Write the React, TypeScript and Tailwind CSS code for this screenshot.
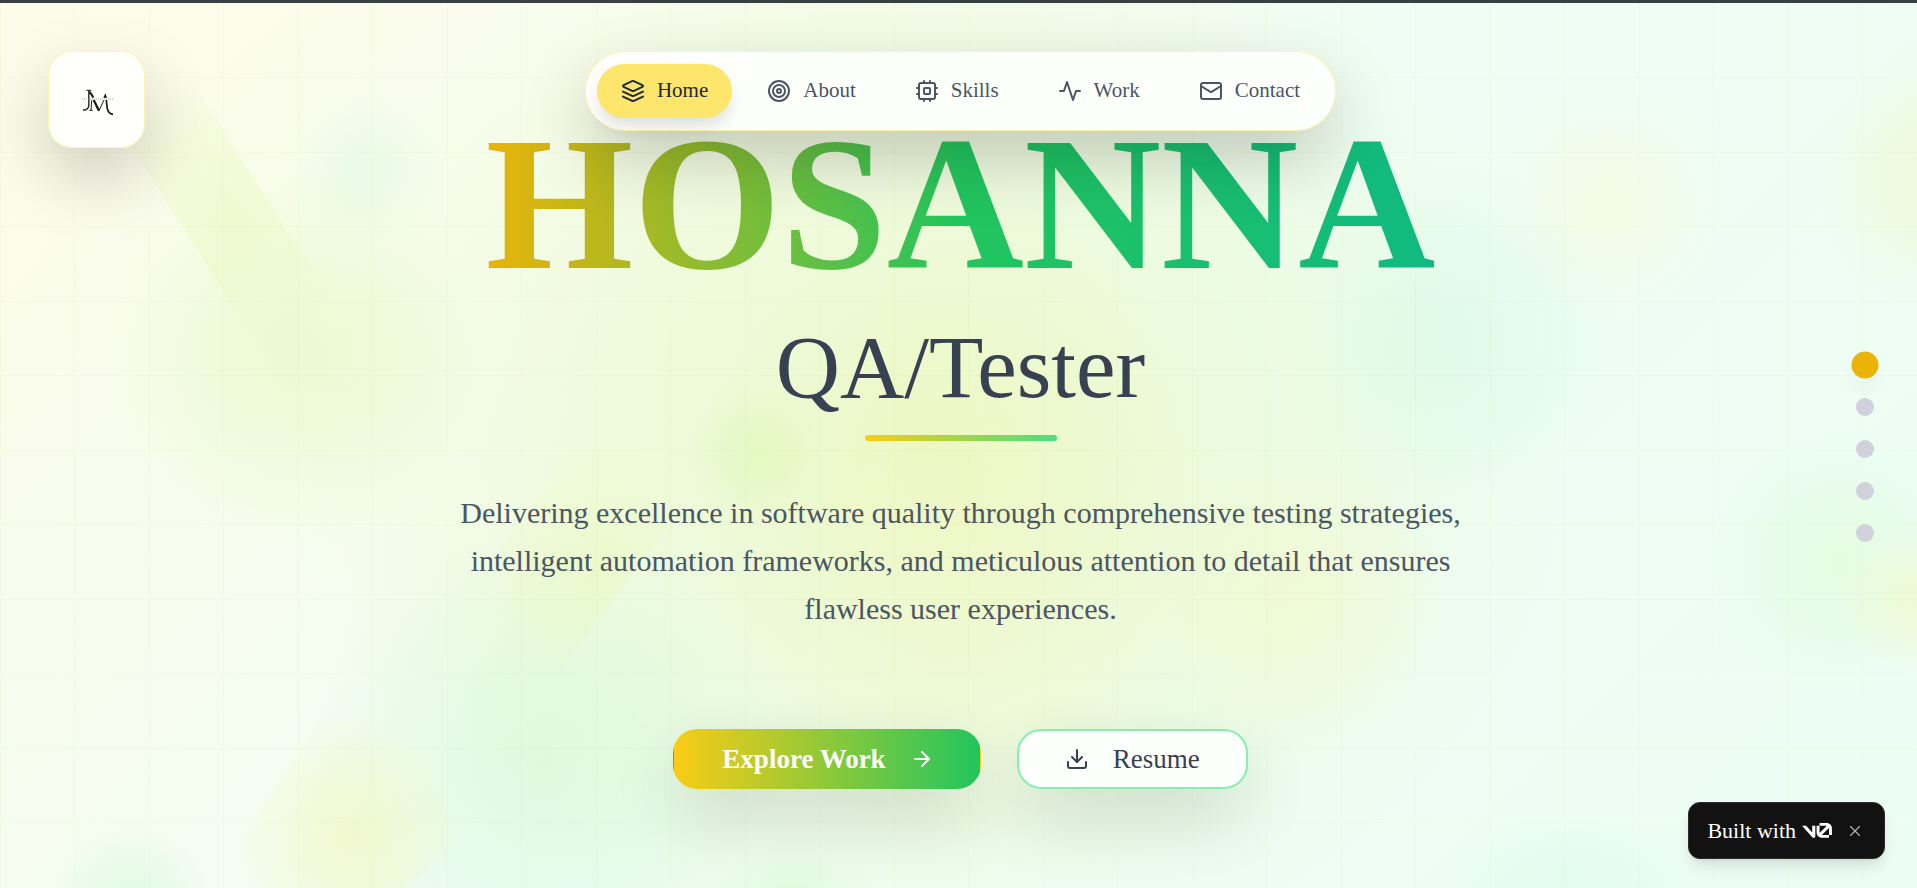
import type { ReactNode } from "react";
import { ArrowRight, Download, Target, X } from "lucide-react";

function LineIcon({ children }: { children: ReactNode }) {
  return (
    <svg
      viewBox="0 0 24 24"
      className="size-6"
      fill="none"
      stroke="currentColor"
      strokeWidth="2"
      strokeLinecap="round"
      strokeLinejoin="round"
      aria-hidden="true"
    >
      {children}
    </svg>
  );
}

const navItems = [
  {
    label: "Home",
    active: true,
    icon: (
      <LineIcon>
        <path d="m12.83 2.18a2 2 0 0 0-1.66 0L2.6 6.08a1 1 0 0 0 0 1.83l8.58 3.91a2 2 0 0 0 1.66 0l8.58-3.9a1 1 0 0 0 0-1.83Z" />
        <path d="m22 17.65-9.17 4.16a2 2 0 0 1-1.66 0L2 17.65" />
        <path d="m22 12.65-9.17 4.16a2 2 0 0 1-1.66 0L2 12.65" />
      </LineIcon>
    ),
  },
  { label: "About", active: false, icon: <Target size={24} aria-hidden="true" /> },
  {
    label: "Skills",
    active: false,
    icon: (
      <LineIcon>
        <rect x="4" y="4" width="16" height="16" rx="2" />
        <rect x="9" y="9" width="6" height="6" rx="1" />
        <path d="M15 2v2M15 20v2M2 15h2M2 9h2M20 15h2M20 9h2M9 2v2M9 20v2" />
      </LineIcon>
    ),
  },
  {
    label: "Work",
    active: false,
    icon: (
      <LineIcon>
        <path d="M22 12h-4l-3 9L9 3l-3 9H2" />
      </LineIcon>
    ),
  },
  {
    label: "Contact",
    active: false,
    icon: (
      <LineIcon>
        <rect x="2" y="4" width="20" height="16" rx="2" />
        <path d="m22 7-8.97 5.7a1.94 1.94 0 0 1-2.06 0L2 7" />
      </LineIcon>
    ),
  },
];

type Blob = { x: number; y: number; rx: number; ry: number; color: string; opacity: number; clip?: string };

const blobs: Blob[] = [
  { x: 930, y: 440, rx: 640, ry: 540, color: "#e2f5a8", opacity: 0.5 },
  { x: 960, y: 520, rx: 260, ry: 320, color: "#fdf3a6", opacity: 0.28 },
  { x: 295, y: 350, rx: 190, ry: 190, color: "#dcf7b4", opacity: 0.5 },
  { x: 225, y: 205, rx: 150, ry: 150, color: "#e6f7b4", opacity: 0.45, clip: "strip" },
  { x: 365, y: 165, rx: 80, ry: 80, color: "#c8f9dc", opacity: 0.34 },
  { x: 755, y: 450, rx: 66, ry: 66, color: "#cdf79f", opacity: 0.34 },
  { x: 1295, y: 595, rx: 150, ry: 150, color: "#fbf3a0", opacity: 0.26 },
  { x: 1450, y: 330, rx: 170, ry: 170, color: "#c4f5de", opacity: 0.34 },
  { x: 1610, y: 200, rx: 120, ry: 120, color: "#fbf7c0", opacity: 0.3 },
  { x: 1930, y: 175, rx: 110, ry: 130, color: "#eef5b0", opacity: 0.4 },
  { x: 1840, y: 560, rx: 130, ry: 130, color: "#d8f9c4", opacity: 0.4 },
  { x: 1925, y: 600, rx: 80, ry: 70, color: "#f8f3a4", opacity: 0.35 },
  { x: 540, y: 760, rx: 240, ry: 240, color: "#c8f5cc", opacity: 0.42 },
  { x: 350, y: 835, rx: 115, ry: 125, color: "#f5f29c", opacity: 0.4, clip: "corner" },
  { x: 590, y: 570, rx: 130, ry: 130, color: "#e8f69c", opacity: 0.28, clip: "band" },
  { x: 130, y: 890, rx: 80, ry: 70, color: "#bff5d0", opacity: 0.34 },
  { x: 1570, y: 900, rx: 130, ry: 90, color: "#c0f7dc", opacity: 0.3 },
  { x: 790, y: 900, rx: 90, ry: 60, color: "#c4f5be", opacity: 0.35 },
];

function Backdrop() {
  return (
    <svg
      aria-hidden="true"
      className="absolute inset-0 h-full w-full"
      viewBox="0 0 1917 888"
      preserveAspectRatio="xMidYMid slice"
    >
      <defs>
        {blobs.map((b, i) => (
          <radialGradient key={i} id={`blob-${i}`}>
            <stop offset="0" stopColor={b.color} stopOpacity={b.opacity} />
            <stop offset="0.5" stopColor={b.color} stopOpacity={b.opacity * 0.55} />
            <stop offset="1" stopColor={b.color} stopOpacity="0" />
          </radialGradient>
        ))}
        <clipPath id="strip">
          <polygon points="150,10 370,360 270,360 90,80" />
        </clipPath>
        <clipPath id="corner">
          <polygon points="225,888 225,860 330,700 480,700 480,820 400,888" />
        </clipPath>
        <clipPath id="band">
          <polygon points="420,660 590,420 700,480 520,720" />
        </clipPath>
      </defs>
      {blobs.map((b, i) => (
        <g key={i} clipPath={b.clip ? `url(#${b.clip})` : undefined}>
          <ellipse cx={b.x} cy={b.y} rx={b.rx} ry={b.ry} fill={`url(#blob-${i})`} />
        </g>
      ))}
    </svg>
  );
}

function Grid() {
  return (
    <div
      aria-hidden="true"
      className="absolute inset-0 bg-[linear-gradient(to_right,#84cc160a_1px,transparent_1px,transparent_74px,#84cc160a_74px,#84cc160a_75px,transparent_75px),linear-gradient(to_bottom,#84cc160a_1px,transparent_1px,transparent_74px,#84cc160a_74px,#84cc160a_75px,transparent_75px)] bg-[size:149px_149px]"
    />
  );
}

function Monogram() {
  return (
    <svg viewBox="0 0 96 84" className="h-7 w-8" fill="none" stroke="#1c1c1c" aria-hidden="true">
      <path d="M13 7H28" strokeWidth="3" />
      <path d="M20.5 7V50C20.5 60 14 66 3 66" strokeWidth="4" />
      <path d="M21 12C28 15 31 22 34 29" strokeWidth="6" />
      <path d="M29 37L27 67M22 67H32" strokeWidth="3" />
      <path d="M35 36L51 68" strokeWidth="7" />
      <path d="M51 68L66 36" strokeWidth="3" />
      <path d="M66 29L70 21L73 29" strokeWidth="4" fill="#1c1c1c" />
      <path d="M73 36C75 54 73 77 93 79" strokeWidth="5" />
      <path d="M0 33H94" strokeWidth="2" strokeDasharray="3 3" stroke="#777" />
    </svg>
  );
}

function V0Logo() {
  return (
    <svg viewBox="0 0 40 20" className="h-[15px] w-[30px]" fill="currentColor" role="img" aria-label="v0">
      <path d="M23.3919 0H32.9188C36.7819 0 39.9136 3.13165 39.9136 6.99475V16.0805H36.0006V6.99475C36.0006 6.90167 35.9969 6.80925 35.9898 6.71766L26.4628 16.079C26.4949 16.08 26.5272 16.0805 26.5595 16.0805H36.0006V19.7762H26.5595C22.6964 19.7762 19.4788 16.6139 19.4788 12.7508V3.68923H23.3919V12.7508C23.3919 12.9253 23.4054 13.0977 23.4316 13.2668L33.1682 3.6995C33.0861 3.6927 33.003 3.68923 32.9188 3.68923H23.3919V0Z" />
      <path d="M13.7688 19.0956L0 3.68759H5.53933L13.6231 12.7337V3.68759H17.7535V17.5746C17.7535 19.6705 15.1654 20.6584 13.7688 19.0956Z" />
    </svg>
  );
}

export default function App() {
  return (
    <div className="relative min-h-screen overflow-hidden border-t-[3px] border-[#374141] bg-[linear-gradient(135deg,#fefce8,#f0fdf4,#ecfdf5)] font-['Liberation_Serif','Times_New_Roman',serif]">
      <Backdrop />
      <Grid />

      <main className="relative flex min-h-screen flex-col items-center justify-center pt-1 pl-1 text-center">
        <h1 className="bg-linear-to-r/srgb from-[#eab308] via-[#22c55e] to-[#10b981] bg-clip-text text-[190px] leading-[190px] font-bold text-transparent">
          HOSANNA
        </h1>
        <p className="mt-6 text-[89px] leading-[88px] text-[#374151]">QA/Tester</p>
        <div className="mt-6 h-1.5 w-48 rounded-full bg-linear-to-r/srgb from-[#facc15] to-[#4ade80]" />
        <p className="mt-12 max-w-5xl text-[30px] leading-[48px] text-[#4b5563]">
          Delivering excellence in software quality through comprehensive testing strategies, intelligent automation
          frameworks, and meticulous attention to detail that ensures flawless user experiences.
        </p>
        <div className="mt-24 flex items-center gap-9">
          <button
            type="button"
            className="flex h-[60px] items-center gap-6 rounded-3xl border border-transparent bg-linear-to-r/srgb from-[#facc15] to-[#22c55e] pr-[46px] pl-12 text-[27px] font-bold text-white shadow-[0_28px_70px_-4px_#00000028]"
          >
            Explore Work
            <ArrowRight size={24} aria-hidden="true" />
          </button>
          <button
            type="button"
            className="flex h-[60px] items-center gap-6 rounded-3xl border-2 border-[#86efac] bg-white/90 px-[46px] text-[27px] text-[#374151] shadow-[0_28px_70px_-4px_#00000028]"
          >
            <Download size={24} aria-hidden="true" />
            Resume
          </button>
        </div>
      </main>

      <header className="absolute inset-x-0 top-12 flex justify-center pl-1">
        <nav
          aria-label="Main"
          className="flex gap-[11px] rounded-full border border-[#fef08a]/70 bg-white/85 px-[11px] py-3 shadow-[0_28px_70px_-4px_#00000038]"
        >
          {navItems.map(({ label, icon, active }) => (
            <button
              key={label}
              type="button"
              aria-current={active ? "page" : undefined}
              className={
                active
                  ? "flex h-[54px] items-center gap-3 rounded-full bg-[#fde66b] px-6 text-[21px] text-[#1f2937] shadow-[0_10px_18px_-3px_#00000024]"
                  : "flex h-[54px] items-center gap-3 rounded-full px-6 text-[21px] text-[#4b5563]"
              }
            >
              {icon}
              {label}
            </button>
          ))}
        </nav>
      </header>

      <a
        href="#home"
        aria-label="Home"
        className="absolute top-12 left-12 flex size-[97px] items-center justify-center rounded-3xl border border-[#fef08a]/70 bg-white/85 pt-1 pl-0.5 shadow-[0_28px_70px_-4px_#00000038]"
      >
        <Monogram />
      </a>

      <div className="absolute inset-y-0 right-[43px] flex flex-col justify-center gap-6 pt-1">
        {navItems.map(({ label, active }) => (
          <button
            key={label}
            type="button"
            aria-label={`Go to ${label}`}
            className={
              active
                ? "size-[18px] scale-150 rounded-full bg-[#eab308] shadow-[0_8px_12px_#0000000a]"
                : "size-[18px] rounded-full bg-[#d1d1db]"
            }
          />
        ))}
      </div>

      <div className="absolute right-8 bottom-8 flex h-[57px] items-center rounded-xl border border-[#2a2a2a] bg-[#121212] pr-5 pl-[18px] text-white shadow-lg">
        <a href="#v0" className="flex items-center gap-1.5 text-[22px]">
          Built with
          <V0Logo />
        </a>
        <button type="button" aria-label="Close" className="ml-3.5 text-[#b5b5b5]">
          <X size={18} strokeWidth={1.5} aria-hidden="true" />
        </button>
      </div>
    </div>
  );
}
